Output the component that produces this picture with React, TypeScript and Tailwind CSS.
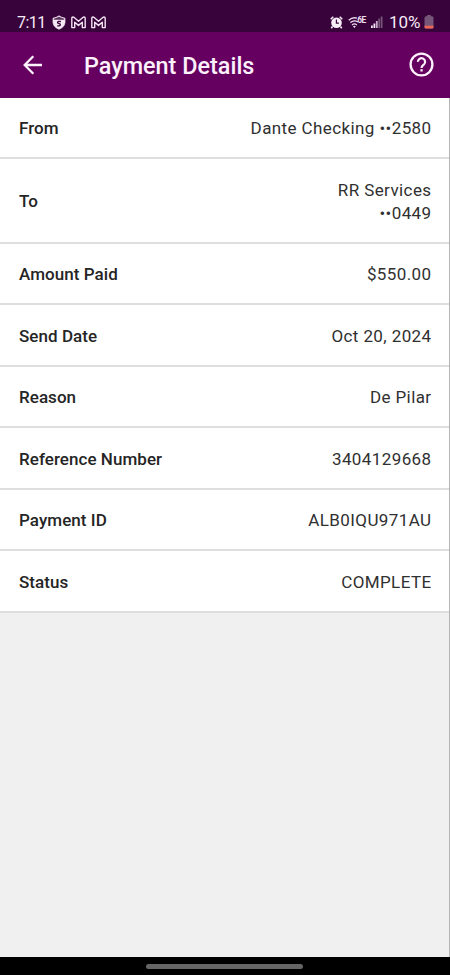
import React from "react";

type Detail = { label: string; value: string[]; height: string };

const details: Detail[] = [
  { label: "From", value: ["Dante Checking ••2580"], height: "h-[61.5px]" },
  { label: "To", value: ["RR Services", "••0449"], height: "h-[84.5px]" },
  { label: "Amount Paid", value: ["$550.00"], height: "h-[61.5px]" },
  { label: "Send Date", value: ["Oct 20, 2024"], height: "h-[61.5px]" },
  { label: "Reason", value: ["De Pilar"], height: "h-[61.5px]" },
  { label: "Reference Number", value: ["3404129668"], height: "h-[61.5px]" },
  { label: "Payment ID", value: ["ALB0IQU971AU"], height: "h-[61.5px]" },
  { label: "Status", value: ["COMPLETE"], height: "h-[61.5px]" },
];

function ShieldIcon() {
  return (
    <svg width="14" height="15" viewBox="0 0 14 15" className="ml-[7px]">
      <path d="M1 3.200Q4.500 2.600 7 .8Q9.500 2.600 13 3.200V7.500Q12.600 12 7 14.300Q1.400 12 1 7.500Z" fill="#f6e9f6" stroke="#f6e9f6" strokeWidth=".7" />
      <path d="M1.800 3.700Q5 3 7 1.800Q9 3 12.200 3.700V4.800H1.800Z" fill="#5a325c" />
      <path d="M8.900 6.500H6.700Q5.400 6.600 5.600 7.700Q5.700 8.500 7 8.600Q8.500 8.800 8.300 9.900Q8.100 10.900 6.900 10.900H5.200" fill="none" stroke="#38053a" strokeWidth="1.300" />
    </svg>
  );
}

function MailIcon() {
  return (
    <svg width="15" height="13" viewBox="0 0 15 13">
      <path d="M.8 11.600V2.300Q.8 1 2 1Q2.600 1 3.200 1.500L7.500 5.200L11.800 1.500Q12.400 1 13 1Q14.200 1 14.200 2.300V11.600H11.300V6.200L7.500 9.400L3.700 6.200V11.600Z" fill="none" stroke="#f3e4f4" strokeWidth="1.400" strokeLinejoin="round" />
    </svg>
  );
}

function AlarmIcon() {
  return (
    <svg width="13" height="13" viewBox="0 0 13 13">
      <path d="M.7 3.300L3.300.8M12.300 3.300L9.700.8" stroke="#f8eef8" strokeWidth="1.500" />
      <path d="M2.500 10.500L1.300 12.200M10.500 10.500L11.700 12.200" stroke="#f8eef8" strokeWidth="1.600" />
      <circle cx="6.500" cy="6.700" r="5.300" fill="#f8eef8" />
      <path d="M6.400 3.600V7.200H8.900" fill="none" stroke="#38053a" strokeWidth="1.200" />
    </svg>
  );
}

function WifiIcon() {
  return (
    <svg width="19" height="13" viewBox="0 0 19 13" className="ml-[5px]">
      <g fill="none" stroke="#eedcef" strokeWidth="1.300">
        <path d="M.7 4.200Q4.500.800 9 2.100" />
        <path d="M2.300 6.600Q6.200 3.400 10 6" />
        <path d="M4 8.900Q6.400 7 8.900 8.900" />
      </g>
      <path d="M4.900 10.300Q6.400 9.300 7.900 10.300L6.400 12Z" fill="#eedcef" />
      <text x="9.300" y="7" fontFamily="Roboto" fontSize="8.500" fontWeight="700" fill="#eedcef" textLength="9">6E</text>
    </svg>
  );
}

function SignalIcon() {
  return (
    <svg width="12" height="13" viewBox="0 0 12 13" className="ml-[4px]">
      <rect x="0" y="9.500" width="1.800" height="2.500" fill="#f5e7f5" />
      <rect x="2.500" y="7.500" width="1.800" height="4.500" fill="#f5e7f5" />
      <rect x="4.900" y="5" width="1.800" height="7" fill="#c8acca" />
      <rect x="7.300" y="2.500" width="1.800" height="9.500" fill="#765678" />
      <rect x="9.700" y=".5" width="1.800" height="11.500" fill="#765678" />
    </svg>
  );
}

function BatteryIcon() {
  return (
    <svg width="10" height="14" viewBox="0 0 10 14" className="ml-[3px]">
      <rect x="3" y="0" width="4" height="2" rx=".6" fill="#765678" />
      <rect x=".5" y="1.200" width="9" height="12.300" rx="1.500" fill="#765678" />
      <path d="M.5 10.800H9.500V12Q9.500 13.500 8 13.500H2Q.5 13.500.5 12Z" fill="#ef6555" />
    </svg>
  );
}

export default function App() {
  return (
    <div className="flex h-[975px] w-[450px] flex-col overflow-hidden bg-[#f0f0f0] font-['Roboto',sans-serif]">
      <div className="flex h-8 shrink-0 items-center justify-between bg-[#38023a] pt-3 pr-[16px] pl-[17px] text-[#f6e9f6]">
        <div className="flex items-center">
          <span className="w-[28px] pt-px text-[16px] leading-5 tracking-[-0.5px] whitespace-nowrap">7:11</span>
          <ShieldIcon />
          <div className="ml-[5px] flex gap-[5px]">
            <MailIcon />
            <MailIcon />
          </div>
        </div>
        <div className="flex items-center">
          <AlarmIcon />
          <WifiIcon />
          <SignalIcon />
          <span className="ml-[6px] w-[32px] text-[17px] leading-5 tracking-[-0.1px] whitespace-nowrap">10%</span>
          <BatteryIcon />
        </div>
      </div>
      <header className="flex h-[65.5px] shrink-0 items-center bg-[#650060] pr-[16px] pl-[23px] text-[#fdf1fc]">
        <svg width="20" height="20" viewBox="0 0 20 20" fill="none" stroke="currentColor" strokeWidth="2.300">
          <path d="M19 10H2.500M10.300 1.300L1.700 10L10.300 18.700" />
        </svg>
        <h1 className="mt-[2px] ml-[41px] text-[23.4px] leading-7 font-medium whitespace-nowrap">Payment Details</h1>
        <svg className="ml-auto" width="25" height="25" viewBox="0 0 25 25" fill="none">
          <circle cx="12.500" cy="12.500" r="10.900" stroke="currentColor" strokeWidth="2.300" />
          <path d="M8.900 9.900A3.600 3.600 0 1 1 14.900 12.500C13.300 13.800 12.500 14.200 12.500 16" stroke="currentColor" strokeWidth="2.200" />
          <rect x="11.400" y="17.200" width="2.300" height="2.300" fill="currentColor" />
        </svg>
      </header>
      <main className="flex-1 border-r border-[#b5b5b5]">
        <dl className="text-[17px] leading-[23px]">
          {details.map(({ label, value, height }) => (
            <div key={label} className={`${height} flex items-center justify-between border-b-2 border-[#dedede] bg-white pt-[3px] pr-[17.5px] pl-[19px]`}>
              <dt className="font-medium tracking-[0.05px] text-[#252525]">{label}</dt>
              <dd className="text-right tracking-[0.4px] text-[#303030]">
                {value.map((line) => (
                  <div key={line}>{line}</div>
                ))}
              </dd>
            </div>
          ))}
        </dl>
      </main>
      <footer className="flex h-[18px] shrink-0 justify-center bg-black pt-[7px] pr-[2px]">
        <div className="h-[5px] w-[157px] rounded-full bg-[#656565]" />
      </footer>
    </div>
  );
}
